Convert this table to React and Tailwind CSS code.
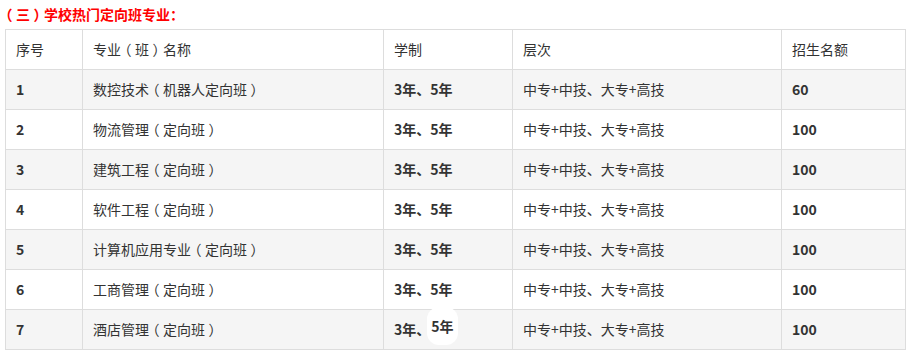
import React from 'react'

const rows = [
  ['1', '数控技术（机器人定向班）', '60'],
  ['2', '物流管理（定向班）', '100'],
  ['3', '建筑工程（定向班）', '100'],
  ['4', '软件工程（定向班）', '100'],
  ['5', '计算机应用专业（定向班）', '100'],
  ['6', '工商管理（定向班）', '100'],
  ['7', '酒店管理（定向班）', '100'],
];

const cell = 'border border-[#dddddd] h-[40px] px-[10px] py-0 text-left align-middle';

const Paren = ({ text }) => (
  <>
    {text.split(/([（）])/).map((part, i) =>
      part === '（' || part === '）' ? (
        <span key={i} className='inline-block w-[14px] text-center [font-feature-settings:"halt"]'>{part}</span>
      ) : (
        <React.Fragment key={i}>{part}</React.Fragment>
      )
    )}
  </>
);

const App = () => {
  return (
    <div className='w-[911px] h-[356px] bg-white text-[14px] text-[#333333] [text-spacing-trim:space-all]' style={{ fontFamily: '"Noto Sans CJK SC", "Noto Sans", sans-serif' }}>
      <div className='h-[29px] pl-[2px] pt-[4px] leading-[20px] font-bold text-[#ff0000]'><Paren text='（三）学校热门定向班专业：' /></div>
      <table className='ml-[5px] border-collapse table-fixed w-[900px]'>
        <colgroup>
          <col className='w-[77px]' />
          <col className='w-[301px]' />
          <col className='w-[129px]' />
          <col className='w-[269px]' />
          <col className='w-[124px]' />
        </colgroup>
        <thead>
          <tr className='bg-white'>
            <th className={`${cell} font-normal`}>序号</th>
            <th className={`${cell} font-normal`}><Paren text='专业（班）名称' /></th>
            <th className={`${cell} font-normal`}>学制</th>
            <th className={`${cell} font-normal`}>层次</th>
            <th className={`${cell} font-normal`}>招生名额</th>
          </tr>
        </thead>
        <tbody>
          {rows.map(([no, name, quota], i) => (
            <tr key={no} className={i % 2 === 0 ? 'bg-[#f5f5f5]' : 'bg-white'}>
              <td className={`${cell} font-bold`}>{no}</td>
              <td className={cell}><Paren text={name} /></td>
              <td className={`${cell} font-bold`}>
                {no === '7' ? (
                  <>3年、<span className='relative -top-[3px] bg-white rounded-[12px] px-[4px] py-[9px] -ml-[3px]'>5年</span></>
                ) : '3年、5年'}
              </td>
              <td className={cell}>中专+中技、大专+高技</td>
              <td className={`${cell} font-bold`}>{quota}</td>
            </tr>
          ))}
        </tbody>
      </table>
    </div>
  )
}

export default App;
